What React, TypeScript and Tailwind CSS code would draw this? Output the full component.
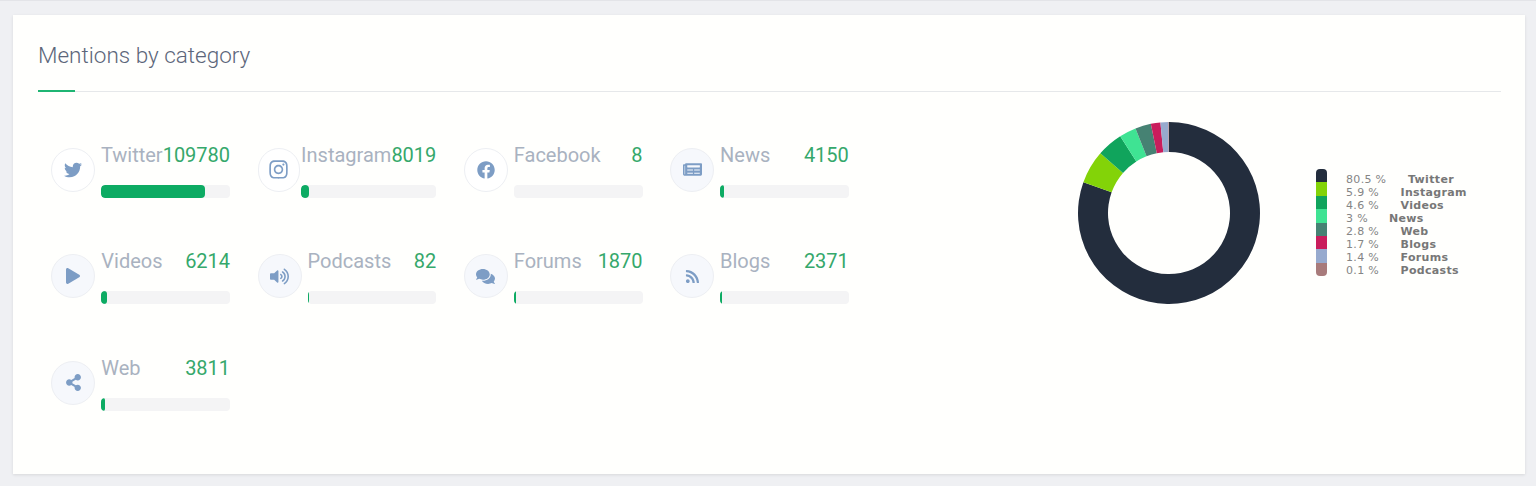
import React from "react";
import { FaTwitter, FaInstagram, FaFacebook, FaNewspaper, FaPlay, FaVolumeUp, FaComments, FaRss, FaShareAlt } from "react-icons/fa";

type Item = { name: string; value: string; pct: number; icon: React.ReactNode; pale: boolean };

const iconCls = "text-[#7d9dc5]";
const items: Item[] = [
  { name: "Twitter", value: "109780", pct: 80.5, icon: <FaTwitter size={18} className={iconCls} />, pale: false },
  { name: "Instagram", value: "8019", pct: 5.9, icon: <FaInstagram size={21} className={iconCls} />, pale: false },
  { name: "Facebook", value: "8", pct: 0, icon: <FaFacebook size={18} className={iconCls} />, pale: false },
  { name: "News", value: "4150", pct: 3, icon: <FaNewspaper size={19} className={iconCls} />, pale: true },
  { name: "Videos", value: "6214", pct: 4.6, icon: <FaPlay size={16} className={iconCls} />, pale: true },
  { name: "Podcasts", value: "82", pct: 0.78, icon: <FaVolumeUp size={19} className={iconCls} />, pale: true },
  { name: "Forums", value: "1870", pct: 1.55, icon: <FaComments size={19} className={iconCls} />, pale: true },
  { name: "Blogs", value: "2371", pct: 1.55, icon: <FaRss size={15} className={iconCls} />, pale: true },
  { name: "Web", value: "3811", pct: 2.8, icon: <FaShareAlt size={17} className={iconCls} />, pale: true },
];

const slices = [
  { name: "Twitter", label: "80.5 %", pct: 80.5, color: "#232d3d" },
  { name: "Instagram", label: "5.9 %", pct: 5.9, color: "#83d308" },
  { name: "Videos", label: "4.6 %", pct: 4.6, color: "#10a45c" },
  { name: "News", label: "3 %", pct: 3, color: "#3fe393" },
  { name: "Web", label: "2.8 %", pct: 2.8, color: "#468273" },
  { name: "Blogs", label: "1.7 %", pct: 1.7, color: "#c91d5c" },
  { name: "Forums", label: "1.4 %", pct: 1.4, color: "#97aace" },
  { name: "Podcasts", label: "0.1 %", pct: 0.1, color: "#a87b7b" },
];

const labelWidths: Record<string, string> = {
  Twitter: "w-[62px]",
  News: "w-[43px]",
};

function point(r: number, a: number) {
  const t = ((a - 90) * Math.PI) / 180;
  return `${(92 + r * Math.cos(t)).toFixed(2)} ${(92 + r * Math.sin(t)).toFixed(2)}`;
}

function Donut() {
  const total = slices.reduce((s, x) => s + x.pct, 0);
  let a = 0;
  return (
    <svg width="184" height="184" viewBox="0 0 184 184" className="block shrink-0">
      {slices.map((s) => {
        const start = a;
        const end = a + (s.pct / total) * 360;
        a = end;
        const large = end - start > 180 ? 1 : 0;
        const d = `M ${point(91, start)} A 91 91 0 ${large} 1 ${point(91, end)} L ${point(61, end)} A 61 61 0 ${large} 0 ${point(61, start)} Z`;
        return <path key={s.name} d={d} fill={s.color} />;
      })}
    </svg>
  );
}

function Legend() {
  return (
    <div className="flex items-start ml-[55px] mt-[48px] font-['DejaVu_Sans',sans-serif] text-[11px] leading-[13px] text-[#858585]">
      <div className="flex flex-col w-[11px] rounded-[4px] overflow-hidden">
        {slices.map((s) => (
          <div key={s.name} className="h-[13.375px]" style={{ backgroundColor: s.color }} />
        ))}
      </div>
      <div className="flex flex-col ml-[19px] pt-[4px]">
        {slices.map((s) => (
          <div key={s.name} className="flex h-[13px] whitespace-nowrap tracking-[0.33px]">
            <span className={labelWidths[s.name] ?? "w-[54.5px]"}>{s.label}</span>
            <span className="font-bold text-[#777777]">{s.name}</span>
          </div>
        ))}
      </div>
    </div>
  );
}

function Metric({ item }: { item: Item }) {
  return (
    <div className="flex w-[178.8px] h-[63px]">
      <div className="w-[50px] shrink min-w-0">
        <div
          className={`w-[44px] max-w-[calc(100%-1px)] h-[44px] mt-[5px] rounded-full border border-[#edeff3] flex items-center justify-center ${item.pale ? "bg-[#f6f8fc]" : "bg-white"}`}
        >
          {item.icon}
        </div>
      </div>
      <div className="grow-1 shrink-0 basis-[128.8px] min-w-fit">
        <div className="flex justify-between text-[20px] leading-[24px] h-[24px] whitespace-nowrap font-['Roboto',sans-serif]">
          <span className="text-[#a9b2c0]">{item.name}</span>
          <span className="text-[#35a86b]">{item.value}</span>
        </div>
        <div className="h-[13px] mt-[18px] rounded-[4px] bg-[#f4f4f5] overflow-hidden">
          <div className={`h-full bg-[#0dab63] ${item.pct >= 2 ? "rounded-[4px]" : ""}`} style={{ width: `${item.pct}%` }} />
        </div>
      </div>
    </div>
  );
}

export default function App() {
  return (
    <div className="h-[486px] bg-[#eff0f3] border-t border-[#e3e4e8] pt-[14px] px-[13px] overflow-hidden font-['Roboto',sans-serif]">
      <div className="h-[459px] w-[1512px] bg-[#fffffd] shadow-[0_1px_3px_rgba(0,0,0,0.1)] pt-[24px] px-[25px]">
        <h2 className="text-[22.5px] leading-[32px] font-light text-[#5c667a]">Mentions by category</h2>
        <div className="mt-[20px] h-[1px] bg-[#e6e8ea] w-[1463px] flex">
          <div className="w-[37px] h-[2px] -mt-[1px] bg-[#1fb573]" />
        </div>
        <div className="flex mt-[29px] pl-[13.3px]">
          <div className="grid grid-cols-[repeat(4,206.25px)] auto-rows-[106.5px] w-[825px] content-start mt-[21.7px]">
            {items.map((it) => (
              <Metric key={it.name} item={it} />
            ))}
          </div>
          <div className="flex items-start ml-[200.7px] h-[184px]">
            <Donut />
            <Legend />
          </div>
        </div>
      </div>
    </div>
  );
}
